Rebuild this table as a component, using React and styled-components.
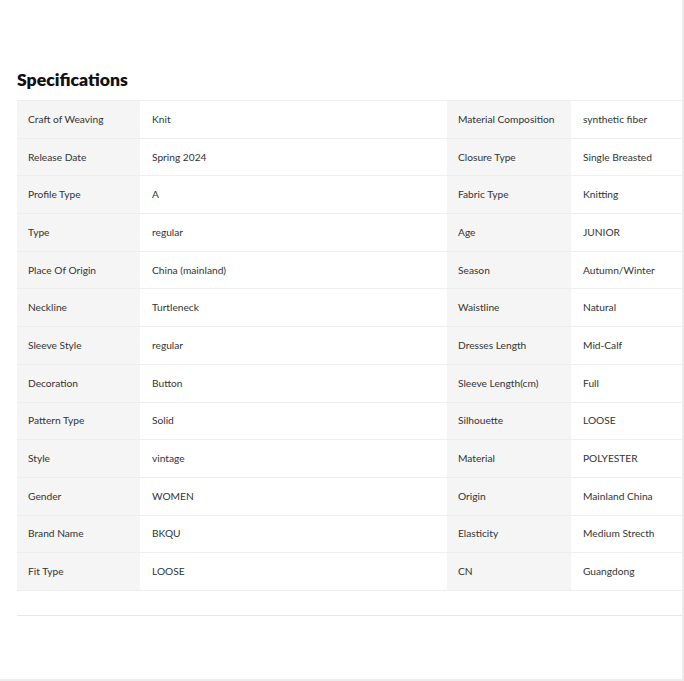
import React from "react";
import styled, { createGlobalStyle } from "styled-components";

const Global = createGlobalStyle`
  html, body { margin: 0; padding: 0; background: #ededed; }
  body { font-family: "Lato", "Liberation Sans", sans-serif; }
`;

const Page = styled.div`
  width: 682px;
  height: 679px;
  background: #fff;
  box-sizing: border-box;
  padding: 69px 0 0 17px;
`;

const Title = styled.h2`
  margin: 0 0 9px 0;
  font-family: "Lato", "Liberation Sans", sans-serif;
  font-size: 17.6px;
  font-weight: 800;
  line-height: 22px;
  color: #111;
`;

const Table = styled.div`
  display: grid;
  grid-template-columns: 123px 307px 124px 111px;
  grid-auto-rows: 37.7px;
  border-top: 1px solid #eeeeee;
`;

const Cell = styled.div`
  display: flex;
  align-items: center;
  box-sizing: border-box;
  padding-left: ${(p) => (p.$label ? "11px" : "12px")};
  padding-bottom: 1px;
  background: ${(p) => (p.$label ? "#f5f5f5" : "#fff")};
  border-bottom: 1px solid #eeeeee;
  font-family: "Lato", "Liberation Sans", sans-serif;
  font-size: 10.2px;
  color: #333;
  white-space: nowrap;
`;

const Footer = styled.div`
  height: 24px;
  width: 665px;
  border-bottom: 1px solid #e8e8e8;
`;

const rows = [
  ["Craft of Weaving", "Knit", "Material Composition", "synthetic fiber"],
  ["Release Date", "Spring 2024", "Closure Type", "Single Breasted"],
  ["Profile Type", "A", "Fabric Type", "Knitting"],
  ["Type", "regular", "Age", "JUNIOR"],
  ["Place Of Origin", "China (mainland)", "Season", "Autumn/Winter"],
  ["Neckline", "Turtleneck", "Waistline", "Natural"],
  ["Sleeve Style", "regular", "Dresses Length", "Mid-Calf"],
  ["Decoration", "Button", "Sleeve Length(cm)", "Full"],
  ["Pattern Type", "Solid", "Silhouette", "LOOSE"],
  ["Style", "vintage", "Material", "POLYESTER"],
  ["Gender", "WOMEN", "Origin", "Mainland China"],
  ["Brand Name", "BKQU", "Elasticity", "Medium Strecth"],
  ["Fit Type", "LOOSE", "CN", "Guangdong"],
];

export default function App() {
  return (
    <>
      <Global />
      <Page>
        <Title>Specifications</Title>
        <Table>
          {rows.map((r, i) => (
            <React.Fragment key={i}>
              <Cell $label>{r[0]}</Cell>
              <Cell>{r[1]}</Cell>
              <Cell $label>{r[2]}</Cell>
              <Cell>{r[3]}</Cell>
            </React.Fragment>
          ))}
        </Table>
        <Footer />
      </Page>
    </>
  );
}
